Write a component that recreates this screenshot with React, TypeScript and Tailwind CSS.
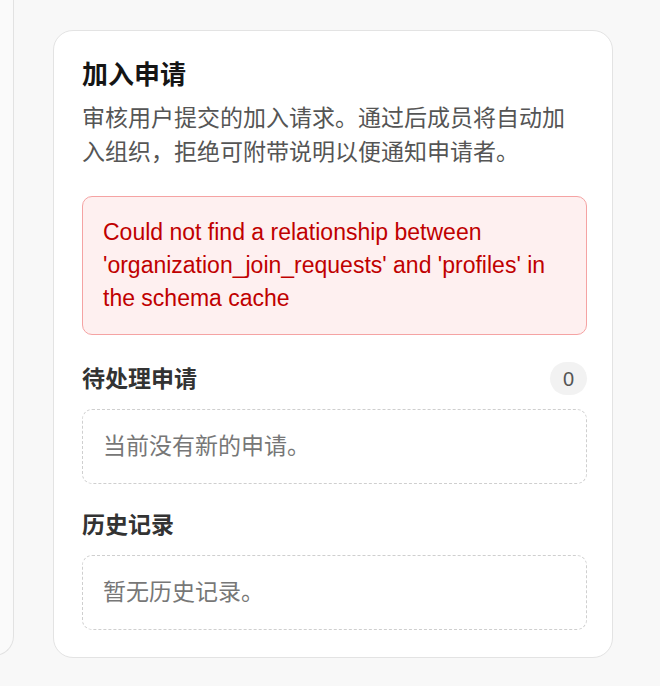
export default function App() {
  const font = { fontFamily: '"Liberation Sans", "Noto Sans CJK SC", sans-serif' };
  return (
    <div
      className="h-[686px] w-[660px] overflow-hidden bg-[#f8f8f8] flex items-start gap-[39px]"
      style={font}
    >
      {/* previous card, mostly scrolled out of view */}
      <div className="-ml-[300px] w-[314px] h-[656px] shrink-0 bg-[#fafafa] border-r border-b border-[#e2e2e2] rounded-br-[20px]" />

      <div className="mt-[30px] w-[560px] shrink-0 bg-white border border-[#e3e3e3] rounded-[20px] pl-7 pr-[25px] pt-7 pb-[27px] flex flex-col">
        <div>
          <h2 className="text-[26px] leading-[32px] font-bold text-[#151515]">加入申请</h2>
          <p className="mt-[10px] text-[23px] leading-[34px] text-[#555]">
            审核用户提交的加入请求。通过后成员将自动加入组织，拒绝可附带说明以便通知申请者。
          </p>
        </div>

        <div className="mt-[27px] rounded-[10px] border border-[#f5a3a3] bg-[#fef0f0] px-5 py-[19px] text-[23px] leading-[33px] text-[#c00000]">
          Could not find a relationship between 'organization_join_requests' and 'profiles' in the schema cache
        </div>

        <section className="mt-[27px] flex flex-col gap-[14px]">
          <div className="flex items-center justify-between h-[33px]">
            <h3 className="text-[23px] leading-[30px] font-semibold text-[#333]">待处理申请</h3>
            <span className="h-[33px] min-w-[37px] px-3 rounded-full bg-[#f2f2f2] text-[20px] text-[#555] flex items-center justify-center">
              0
            </span>
          </div>
          <div className="h-[75px] rounded-[10px] border border-dashed border-[#cfcfcf] px-5 flex items-center text-[23px] text-[#777]">
            当前没有新的申请。
          </div>
        </section>

        <section className="mt-[26px] flex flex-col gap-[15px]">
          <h3 className="text-[23px] leading-[30px] font-semibold text-[#333]">历史记录</h3>
          <div className="h-[75px] rounded-[10px] border border-dashed border-[#cfcfcf] px-5 flex items-center text-[23px] text-[#777]">
            暂无历史记录。
          </div>
        </section>
      </div>
    </div>
  );
}
